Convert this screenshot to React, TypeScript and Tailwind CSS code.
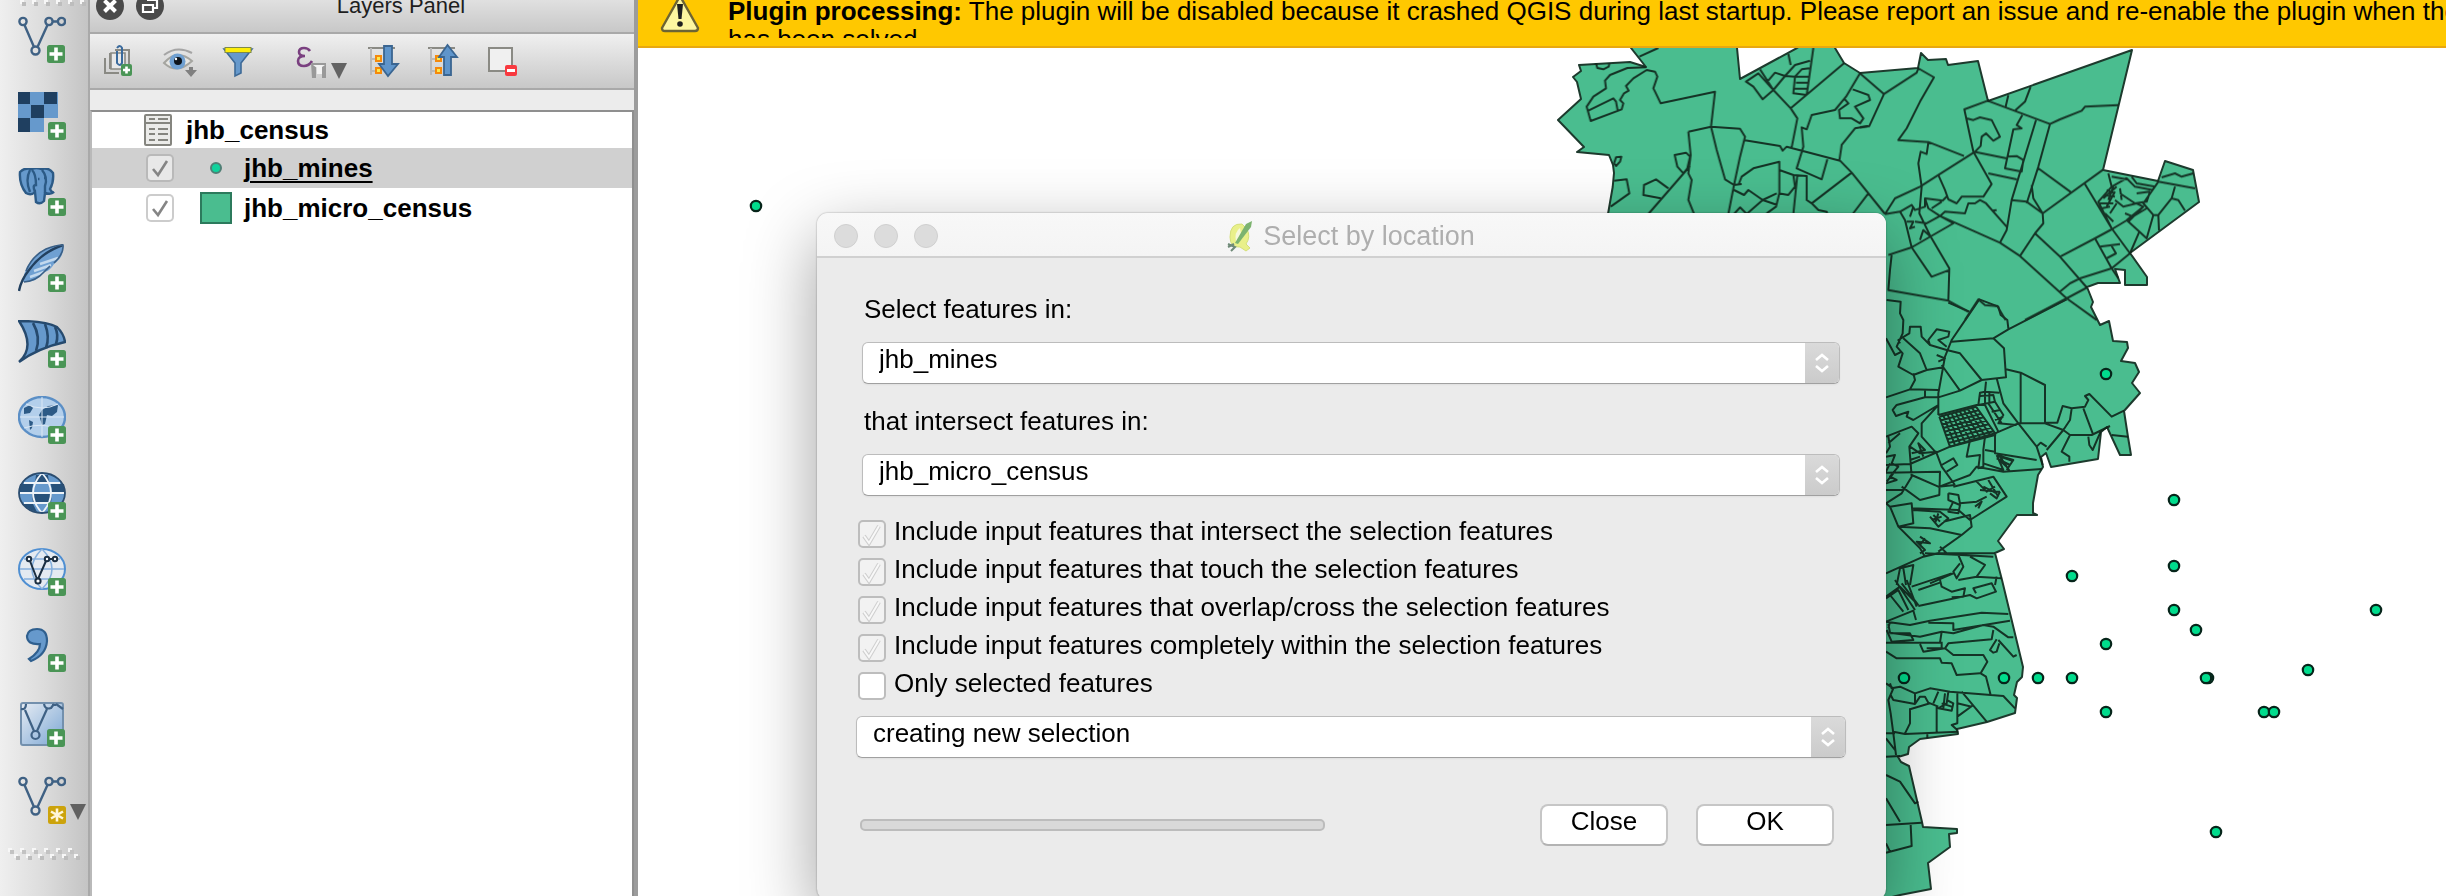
import React from "react";

type IconProps = { children: React.ReactNode; label: string };

function PlusBadge({ x = 30, y = 30 }: { x?: number; y?: number }) {
  return (
    <g transform={`translate(${x} ${y})`}>
      <rect width="18" height="18" rx="2.5" fill="#4a9556" />
      <path d="M9 2.5V15.5M2.5 9H15.5" stroke="#fff" strokeWidth="3.6" />
    </g>
  );
}

function VectorShape() {
  return (
    <g stroke="#3f6184" strokeWidth="2.4" fill="none">
      <path d="M6.5 9 L16 31 M19.5 31 L29.5 9 M35 5.5 H39" />
      <circle cx="5" cy="5.5" r="3.6" />
      <circle cx="31" cy="5.5" r="3.6" />
      <circle cx="43.5" cy="5.5" r="3.6" />
      <circle cx="17.5" cy="34.5" r="4" />
    </g>
  );
}

function ToolButton({ children, label }: IconProps) {
  return (
    <button type="button" aria-label={label} className="block size-12 shrink-0">
      <svg viewBox="0 0 48 48" className="size-12">
        {children}
      </svg>
    </button>
  );
}

function Grip({ className }: { className: string }) {
  return (
    <svg viewBox="0 0 72 12" className={className}>
      {[0, 1, 2, 3, 4, 5].map((i) => (
        <g key={i} transform={`translate(${i * 12} 0)`}>
          <rect x="0" y="0" width="4" height="4" fill="#f7f7f7" />
          <rect x="2" y="2" width="4" height="4" fill="#c2c2c2" />
          <rect x="6" y="6" width="4" height="4" fill="#f7f7f7" />
          <rect x="8" y="8" width="4" height="4" fill="#bdbdbd" />
        </g>
      ))}
    </svg>
  );
}

function SideToolbar() {
  return (
    <nav
      aria-label="Manage layers"
      className="flex w-[90px] shrink-0 flex-col border-r-2 border-[#a9a9a9] bg-linear-to-r from-[#efefef] via-[#dcdcdc] to-[#c4c4c4] pl-[18px]"
    >
      <Grip className="-mt-1.5 mb-2.5 -ml-1 h-3 w-[72px]" />
      <div className="flex flex-col gap-7">
        <ToolButton label="Add vector layer">
          <VectorShape />
          <PlusBadge x={29} y={29} />
        </ToolButton>
        <ToolButton label="Add raster layer">
          <rect width="40" height="40" fill="#6699cc" />
          <path d="M0 0H12V12H0zM26 0H39V12H26zM13 13H26V26H13zM0 26H12V40H0z" fill="#1f3f60" />
          <path d="M26 26H40V40H26z" fill="#d6d6d6" />
          <PlusBadge />
        </ToolButton>
        <ToolButton label="Add PostGIS layers">
          <path
            d="M2 4 Q7 -1 14 1 Q18 -1 23 1 Q31 -1 35 5 Q36 14 32 21 Q34 25 36 24 Q33 27 27 25 L26 33 Q22 37 18 34 L17 24 Q13 28 8 25 Q1 16 2 4Z"
            fill="#6699cc"
            stroke="#2c5a86"
            strokeWidth="2.4"
          />
          <path
            d="M12 2 Q7 12 12 24 M17 24 Q14 17 18 17 Q18 6 14 2 M24 2 Q30 9 27 18 L27 25 M20 11 h1.5 M26 10 h1.5"
            fill="none"
            stroke="#2c5a86"
            strokeWidth="2.4"
          />
          <PlusBadge />
        </ToolButton>
        <ToolButton label="Add SpatiaLite layer">
          <path d="M5 38 Q6 20 22 8 Q32 2 45 1 Q47 12 36 20 Q32 27 26 28 Q20 38 6 38Z" fill="#6fa0d2" />
          <path d="M12 33 L26 28 M16 27 L33 21 M22 20 L40 14" stroke="#c3d9ee" strokeWidth="2.4" />
          <path d="M1 47 Q3 36 11 26 Q24 8 45 1" fill="none" stroke="#22405f" strokeWidth="2.4" />
          <path d="M8 27 Q14 12 28 5 Q38 1 45 1 Q46 10 36 19 M6 38 Q18 37 26 28 L32 22" fill="none" stroke="#3a5f86" strokeWidth="1.6" />
          <PlusBadge />
        </ToolButton>
        <ToolButton label="Add MSSQL layer">
          <path
            d="M1 1 Q28 1 39 7 Q46 14 47 22 Q20 28 1 42 Q18 27 1 1Z"
            fill="#6699cc"
            stroke="#264a6e"
            strokeWidth="2.4"
          />
          <path d="M15 3 Q23 17 18 31 M27 4 Q32 17 28 28 M37 7 Q41 15 38 24" fill="none" stroke="#264a6e" strokeWidth="2.6" />
          <PlusBadge />
        </ToolButton>
        <ToolButton label="Add WMS layer">
          <ellipse cx="24" cy="21" rx="23" ry="20" fill="#b3cfeb" stroke="#5b8fc6" strokeWidth="2.4" />
          <path
            d="M6 12 L12 9 L15 12 L12 17 L6 18Z M24 14 L30 10 L40 9 L39 16 L34 20 L29 19 L27 28 L24 29 L21 19Z M11 24 L15 26 L14 32 L12 34Z M17 8 L21 7 M32 26 L37 25"
            fill="#2c5a86"
          />
          <path d="M2 21H46 M8 8 Q24 16 40 8 M6 32 Q24 26 40 33 M24 1V41" fill="none" stroke="#dbe8f5" strokeWidth="1" />
          <PlusBadge />
        </ToolButton>
        <ToolButton label="Add WCS layer">
          <ellipse cx="24" cy="21" rx="23" ry="20" fill="#6699cc" />
          <path d="M2 12H15L14 21H1Z M33 12H46L47 21H34Z M18 3H30L31 11H17Z M14 21H34L33 31H15Z M5 32H15L19 40Q10 38 5 32Z" fill="#27517a" />
          <path d="M6 11H42 M2 21H46 M6 31H42 M24 1 Q6 21 24 41 M24 1 Q42 21 24 41" fill="none" stroke="#eef3f8" strokeWidth="1.8" />
          <ellipse cx="24" cy="21" rx="23" ry="20" fill="none" stroke="#2b4d70" strokeWidth="1.8" />
          <PlusBadge />
        </ToolButton>
        <ToolButton label="Add WFS layer">
          <ellipse cx="24" cy="21" rx="23" ry="20" fill="#e4eaf1" stroke="#4f8fd2" strokeWidth="2" />
          <path d="M6 11H42 M2 21H46 M6 31H42 M24 1 Q4 21 24 41 M24 1 Q44 21 24 41" fill="none" stroke="#86b0dd" strokeWidth="1.5" />
          <g fill="none" stroke="#1c2f42" strokeWidth="2">
            <path d="M12 13 L19 31 M20 31 L28 13 M30 11H36" />
            <circle cx="11" cy="11" r="2.2" fill="#fff" />
            <circle cx="29" cy="11" r="2.2" fill="#fff" />
            <circle cx="37" cy="11" r="2.2" fill="#fff" />
            <circle cx="20" cy="33" r="2.6" fill="#fff" />
          </g>
          <PlusBadge />
        </ToolButton>
        <ToolButton label="Add delimited text layer">
          <path
            d="M19 5 Q29 5 29 17 Q28 31 13 37 L11 35 Q22 28 22 20 Q9 21 9 12 Q10 5 19 5Z"
            fill="#6699cc"
            stroke="#2f5f8e"
            strokeWidth="2.2"
          />
          <PlusBadge />
        </ToolButton>
        <ToolButton label="Add virtual layer">
          <defs>
            <linearGradient id="virtual" x1="0" y1="0" x2="1" y2="1">
              <stop offset="0" stopColor="#e6ecf3" />
              <stop offset="1" stopColor="#7ba6d4" />
            </linearGradient>
          </defs>
          <rect x="3" y="3" width="42" height="42" rx="2" fill="url(#virtual)" stroke="#7390ad" strokeWidth="2" />
          <g fill="none" stroke="#3f6184" strokeWidth="2.2">
            <path d="M7 10 L16 31 M19 31 L29 9 M34 5 H38" />
            <path d="M3 9 Q8 10 8 4 M26 4 Q27 10 33 8 L36 4 M38 4 L45 9" />
            <circle cx="17.5" cy="35" r="4" />
          </g>
          <PlusBadge x={29} y={29} />
        </ToolButton>
        <div className="flex items-end">
          <ToolButton label="New shapefile layer">
            <VectorShape />
            <rect x="30" y="30" width="18" height="18" rx="2.5" fill="#cca30c" />
            <path d="M39 32.500V45.500M33 35.500L45 42.500M45 35.500L33 42.500" stroke="#fff6d8" strokeWidth="2.6" />
          </ToolButton>
          <svg viewBox="0 0 16 16" className="mb-1 ml-1 size-4">
            <path d="M0 0H16L8 16Z" fill="#616161" />
          </svg>
        </div>
      </div>
      <Grip className="mt-6 -ml-2.5 h-3 w-[72px]" />
    </nav>
  );
}

function PanelButton({ label, children, className }: IconProps & { className: string }) {
  return (
    <button type="button" aria-label={label} className={"block h-9 w-9 shrink-0 " + className}>
      <svg viewBox="0 0 36 36" className="size-9">
        {children}
      </svg>
    </button>
  );
}

function TreeIcon() {
  return (
    <g>
      <path d="M3 5H30" stroke="#8a8a84" strokeWidth="2" />
      <path d="M6 5V32 M6 16H12 M6 28H12" stroke="#b9b9b9" strokeWidth="2" fill="none" />
      <rect x="11" y="13" width="5" height="5" fill="#fce94f" stroke="#f58a0b" strokeWidth="2" />
      <rect x="11" y="25" width="5" height="5" fill="#fce94f" stroke="#f58a0b" strokeWidth="2" />
    </g>
  );
}

function CheckBox({ id, checked, faded }: { id: string; checked: boolean; faded?: boolean }) {
  return (
    <span className="grid size-7 shrink-0">
      <input
        id={id}
        type="checkbox"
        defaultChecked={checked}
        className={
          "col-start-1 row-start-1 size-7 appearance-none rounded-[5px] border-2 " +
          (faded ? "border-[#bdbdbd] bg-[#f2f2f2]" : checked ? "border-black/20 bg-white/50" : "border-[#bdbdbd] bg-white")
        }
      />
      {checked && (
        <svg viewBox="0 0 28 28" className="pointer-events-none col-start-1 row-start-1 size-7">
          {faded ? (
            <g fill="none">
              <path d="M6 16 L11 23 L21 6" stroke="#cfcfcf" strokeWidth="4" />
              <path d="M6 16 L11 23 L21 6" stroke="#f8f8f8" strokeWidth="2" />
            </g>
          ) : (
            <path d="M7 15 L12 21 L21 7" fill="none" stroke="#858585" strokeWidth="2.6" />
          )}
        </svg>
      )}
    </span>
  );
}

function LayersPanel() {
  return (
    <aside className="flex w-[548px] shrink-0 flex-col border-r-4 border-[#9c9c9c] bg-[#ececec]">
      <header className="h-[34px] overflow-hidden border-b-2 border-[#a9a9a9] bg-linear-to-b from-[#e0e0e0] to-[#c8c8c8]">
        <div className="-mt-2.5 flex h-8 items-center gap-3 pl-1.5">
          <button type="button" aria-label="Close panel" className="size-7">
            <svg viewBox="0 0 28 28">
              <circle cx="14" cy="14" r="14" fill="#4a4a4a" />
              <path d="M8.500 8.500L19.500 19.500M19.500 8.500L8.500 19.500" stroke="#fff" strokeWidth="4" />
            </svg>
          </button>
          <button type="button" aria-label="Float panel" className="size-7">
            <svg viewBox="0 0 28 28">
              <circle cx="14" cy="14" r="14" fill="#4a4a4a" />
              <path d="M11 8H21V16H18 M7 13H17V20H7Z" fill="none" stroke="#fff" strokeWidth="2.2" />
            </svg>
          </button>
          <h2 className="flex-1 pr-2 text-center text-[22px] leading-6 text-[#1e1e1e]">Layers Panel</h2>
        </div>
      </header>

      <div className="flex h-14 items-center border-b-2 border-[#a9a9a9] bg-linear-to-b from-[#f0f0f0] to-[#c8c8c8] pl-2.5">
        <PanelButton label="Add group" className="">
          <path d="M5 15V30H19 M10 10V25H25 M15 7H29V22" fill="none" stroke="#8a8a84" strokeWidth="2" />
          <path d="M11 10H25V26H11Z" fill="#e9e9e9" stroke="#8a8a84" strokeWidth="1.6" />
          <path d="M17 8V20Q20 24 22 20V5Q20 1 17 5" fill="none" stroke="#3a6a9c" strokeWidth="2" />
          <rect x="21" y="21" width="11" height="12" rx="2" fill="#4a9556" />
          <path d="M26.500 23.500V30.500M23 27H30" stroke="#fff" strokeWidth="2.6" />
        </PanelButton>
        <PanelButton label="Manage layer visibility" className="ml-[26px]">
          <path d="M2 12 Q15 2 30 10" fill="none" stroke="#a5a5a5" strokeWidth="2" />
          <path d="M2 20 Q15 5 30 18 Q15 32 2 20Z" fill="#e6e6e3" stroke="#a5a5a0" strokeWidth="2" />
          <circle cx="15.500" cy="18.500" r="8" fill="#6fa0d2" />
          <circle cx="16" cy="18" r="4" fill="#0d141c" />
          <circle cx="14" cy="16" r="1.200" fill="#fff" />
          <path d="M23 27H35L29 34Z M27 24H31V28H27Z" fill="#808080" />
        </PanelButton>
        <PanelButton label="Filter legend" className="ml-[22px]">
          <path d="M4 6H32L21 20V30L15 33V20Z" fill="#6699cc" stroke="#3e6a97" strokeWidth="1.600" />
          <rect x="5" y="4.500" width="26" height="5" fill="#fdee0a" stroke="#7f8a4a" strokeWidth="1" />
        </PanelButton>
        <button type="button" aria-label="Filter legend by expression" className="ml-10 block h-9 w-[52px]">
          <svg viewBox="0 0 52 36" className="h-9 w-[52px]">
            <path d="M14 8 Q12 5 8 5 Q3 5 3 9 Q3 13 9 13 Q2 13 2 18 Q2 23 8 23 Q13 23 16 18" fill="none" stroke="#7a4080" strokeWidth="2.600" />
            <path d="M15 20H30V35H26V25L23 22L20 25V35H16Z" fill="#999" />
            <path d="M17 22H29L26 24V31H21V25Z" fill="#f3f3f3" />
            <path d="M35 20H51L43 36Z" fill="#636363" />
          </svg>
        </button>
        <PanelButton label="Expand all" className="ml-[17px]">
          <TreeIcon />
          <path d="M19 3H27V21H33L23 33L14 21H19Z" fill="#5f95cb" stroke="#3a6591" strokeWidth="1.800" />
        </PanelButton>
        <PanelButton label="Collapse all" className="ml-6">
          <TreeIcon />
          <path d="M19 32H26V14H32L22.500 2L14 14H19Z" fill="#5f95cb" stroke="#3a6591" strokeWidth="1.800" />
        </PanelButton>
        <PanelButton label="Remove layer" className="ml-6">
          <rect x="4" y="5" width="23" height="23" fill="#f0f0f0" stroke="#8a8a84" strokeWidth="2" />
          <rect x="20" y="22" width="12" height="11" rx="2" fill="#f8393f" />
          <path d="M22 27.500H30" stroke="#fff" strokeWidth="3" />
        </PanelButton>
      </div>

      <ul className="mt-5 flex-1 border-t-2 border-r-2 border-l-2 border-[#8f8f8f] border-l-[#b9b9b9] bg-white text-[26px] leading-7 font-bold text-black">
        <li className="flex h-9 items-center pl-[52px]">
          <svg viewBox="0 0 28 32" className="h-8 w-7">
            <rect x="1" y="1" width="26" height="30" rx="1" fill="#ebebe9" stroke="#85857f" strokeWidth="2" />
            <path d="M2 9H26" stroke="#85857f" strokeWidth="2" />
            <path d="M5 5H11M14 5H24M5 15H11M14 15H24M5 20H11M14 20H24M5 26H11M14 26H24" stroke="#85857f" strokeWidth="2" />
          </svg>
          <span className="ml-3.5">jhb_census</span>
        </li>
        <li className="flex h-10 items-center bg-[#d0d0d0] pl-[54px]">
          <CheckBox id="layer-mines" checked />
          <svg viewBox="0 0 32 32" className="ml-[26px] size-8">
            <circle cx="16" cy="16" r="5" fill="#10d29c" stroke="#4f7f75" strokeWidth="2" />
          </svg>
          <label htmlFor="layer-mines" className="ml-3 underline decoration-2 underline-offset-4">
            jhb_mines
          </label>
        </li>
        <li className="flex h-10 items-center pl-[54px]">
          <CheckBox id="layer-micro" checked />
          <span className="ml-[26px] size-8 border-2 border-[#2c7a5c] bg-[#4abd8f]" />
          <label htmlFor="layer-micro" className="ml-3">
            jhb_micro_census
          </label>
        </li>
      </ul>
    </aside>
  );
}

const OUTLINE =
  "M1608 214 L1612.700 187 L1614 173 L1613 165 L1609 155 L1577 152 L1584 147 L1558 120 L1581 99 L1577 82 L1573 77 L1581 71 L1579 65 L1630 62 L1646 67 L1631 48 L1629 40 H1736 L1737 48 L1740 79 L1797 48 L1810 40 H1832 L1835 48 L1844 63 L1860 73 L1918 68 L1921 53 L1928 60 L1946 59 L1948 65 L1978 61 L1988 101 L2132 50 L2103 170 L2158 181 L2165 161 L2193 170 L2199 202 L2130 253 L2147 277 L2147 285 L2125 285 L2125 270 L2115 269 L2120 283 L2098 283 L2087 287 L2093 302 L2091 307 L2100 325 L2109 321 L2113 341 L2127 342 L2128 348 L2121 361 L2135 363 L2139 372 L2132 383 L2140 393 L2124 411 L2128 437 L2131 455 L2120 455 L2107 427 L2101 432 L2098 459 L2051 467 L2046 453 L2041 457 L2043 467 L2038 475 L2033 503 L2033 513 L2037 515 L2017 515 L1998 541 L2004 549 L1995 553 L2002 580 L2023 667 L2022 677 L2017 682 L2014 695 L2017 698 L2015 713 L1987 722 L1957 729 L1958 734 L1920 739 L1909 747 L1908 754 L1898 757 L1901 762 L1909 766 L1922 822 L1923 827 L1957 829 L1957 833 L1949 834 L1950 847 L1928 863 L1931 889 L1900 895 L1880 900 H1700 Z";

const NORTH_WEST =
  "M298 50L355 24 M168 70L172 84L190 88L206 80L208 70 M318 82L262 84L210 105L195 122L198 145L160 170L140 200L152 243L245 208L250 190L240 180L252 160L266 152L258 138L280 115L320 90L345 95L352 110L340 145L345 155L362 190L525 155L513 260 M145 212L220 175L228 185L233 212 M445 275L513 260L600 266L615 290L600 350L582 435L565 522 M445 275L452 345L445 400L455 420L445 480L462 522 M513 260L530 330L555 418L582 435L605 432 M404 345L438 338L450 350L442 385L430 400L412 380Z M450 378L325 522 M385 445L348 418L312 435L310 465L362 475 M222 370L228 352L244 350L240 365L228 378Z M222 422L260 418L268 460L212 500 M610 300L720 318L728 332L740 320L900 362L935 398L1035 522 M595 435L605 410L640 385L718 365L718 460L708 500L680 520 M582 450L612 465L625 450L668 480L710 460 M668 480L712 495 M668 480L620 522 M582 522L600 502L620 522 M718 390L760 405L765 440L745 465L715 460 M760 405L800 408L800 480L815 490L935 398 M772 405L760 522 M815 490L835 510L860 515L862 522 M985 460L938 522 M752 205L772 235L755 322 M752 205L700 150L660 88 M912 70L752 205 M618 125L655 100L682 130L700 150L668 178L640 140Z M682 125L705 98L735 108L765 75L810 62 M745 42L752 75 M820 24L800 165 M735 108L765 110H805 M765 110L760 160L800 165 M768 128H803 M764 146H802 M765 110L785 88L808 85 M735 108L700 150 M960 100L918 170L885 210L815 225L800 268L785 262L790 320L770 385L845 418L862 358 M938 148L985 165L990 180L945 200L970 235L960 250L935 235L900 235L897 210L925 190L912 175 M985 258L945 265L905 315L898 362";

const NORTH_EAST =
  "M0 100L72 162L28 258L0 262 M72 162L170 98L175 85L222 112L180 185L140 265L115 300L205 306L312 348 M205 308L200 342L182 335L175 370L185 440L178 520L212 590L268 685L265 782 M75 522L105 475L180 440L235 405L345 335L362 318L365 290L378 280L400 302L420 290L395 240L360 232L340 240L320 235 M383 182L313 208L340 335L395 432L370 470L305 470L290 490L265 478L255 450L235 405 M383 182L570 252L600 238L665 212L675 200L775 195 M437 200L445 165 M465 212L495 185L512 140 M487 225L470 255L485 265L460 268L435 385L485 395L490 360L470 348L440 350 M340 335L440 355 M528 240L455 480L440 570L420 608 M570 252L535 380L500 490 M455 480L500 485L548 520L550 550L525 580L480 648 M535 385L635 458 M515 435L520 475L548 520L728 390 M385 400L470 418 M75 522L120 515L135 540L155 622 M120 515L155 495L165 510L195 500L195 475L248 482L260 470 M195 475L205 505L240 528L420 608L480 648L620 775L710 840 M215 505L245 485 M240 528L255 515L315 520L325 490L345 490L360 480L378 490L440 560 M85 645L155 622L280 550L240 528 M155 622L215 710L268 690 M140 545L160 545L150 565L165 560 M165 545L200 550L240 528 M180 600L190 570L212 590 M150 530L160 500 M95 645L90 690L85 750L265 782L325 815 M395 512L410 510 M315 840L355 778L375 795L412 798L437 840 M495 840L620 775L682 742 M525 580L600 650L680 742 M600 650L705 595L755 568L860 505 M600 755L630 730L660 715L755 685L810 640 M675 432L755 565L810 640 M705 595L755 685L775 715 M720 620L780 612 M755 618L768 640L740 655 M810 640L838 575L800 540 M838 575L860 595L880 525L895 525L897 572 M880 525L850 490L895 425L1005 445 M905 412L945 400L965 410L1000 400 M945 440L935 475L895 525 M935 475L955 480L975 512 M745 400L755 440L715 485L755 565 M755 440L800 415L825 440L880 450 M780 460L825 490L860 485L870 455 M830 460L870 455 M765 480L790 500L830 490L850 500L800 540 M755 410L800 418 M815 410L830 430L885 440 M735 465L765 470 M720 490H760 M725 505L750 500 M740 450L765 460 M730 475L770 440 M740 500L765 455 M750 520L770 490 M795 520L820 530 M805 545L850 500 M735 520L760 545 M760 440L745 480 M780 445L785 480";

const CENTRE =
  "M50 30L92 35L90 70L100 90L98 130L80 170L98 190L85 230L130 255L170 240L220 232 M235 38L298 65 M415 115L412 90L392 75L385 50L328 28L245 150L225 200L205 310L205 375 M590 28L415 118L370 145L245 155 M370 145L402 175L408 262L335 270L270 190L230 180 M335 270L270 302L205 322 M270 302L215 225 M408 238L452 248L525 285L525 400L445 400L400 340L380 265 M452 248V400 M525 400L580 420L530 480 M525 398L562 398L578 348L605 355L600 390L580 420L600 435L665 435L720 408 M605 355L645 350L655 330L645 318L658 312L725 380L762 362 M640 355L668 430 M600 435L575 485L598 500V515 M692 425L668 480L658 465L655 440 M725 435L774 440 M445 400L500 470L518 525 M500 470L512 458L530 470 M445 400L375 430L375 490L500 510 M205 375L320 345L345 345L385 425 M325 345L330 308L345 305L348 275 M345 305L388 308 M330 318L370 315L375 335L325 345 M355 340L395 400 M375 335L400 375L385 400L440 405 M365 365L390 360 M345 308V340 M358 308V340 M375 390L400 380 M205 300L120 298L48 322 M130 250L135 270L120 298 M165 302V320 M205 322L165 322L80 345L68 360L78 378L115 365L110 380L130 390L205 345L155 400L155 440L200 490 M48 440L125 410L145 430L118 470L125 560L95 610L48 640 M48 525L120 522L240 470L375 430 M200 490L215 530L255 585 M48 548L210 545L208 615L150 630L95 590 M48 145L75 195L95 185 M90 160L85 150L118 130L120 110H152L155 140L180 165L230 180 M180 165L175 150L200 118L238 125L235 140L205 150L230 170 M100 145L150 190L170 240 M200 195L225 205L205 215 M208 590L300 555L320 530L400 545L515 537 M125 555L205 590L255 585 M250 590L370 560L410 620L300 690 M290 500L330 495L325 535L340 530V480L345 440L300 450Z M345 480L375 485 M340 520L400 540L380 495 M380 495L430 510L410 540 M380 505L420 525 M390 500L420 545 M385 498L425 512 M388 510L415 535 M215 525L250 505L262 525L230 545 M235 610L265 615L270 640L320 635L350 620 M235 610L235 630L270 645L265 670L235 665L250 635 M320 575L350 605L375 590 M330 600L390 605 M355 570L385 620 M340 590L380 610 M360 610L380 625L390 605 M315 650L335 635L325 655 M60 650L48 640 M60 650L125 640L130 700L85 710Z M85 710L150 775L165 800 M85 710L180 715L275 735L205 785 M130 660L210 665L235 685L205 710L180 680 M125 655L265 660L300 690 M190 675L210 695 M205 670L195 700 M185 690L215 680 M220 695L300 675L305 710L275 735 M150 740L180 760L140 755L165 780L150 790 M165 745L150 765 M210 770L230 790 M48 850L160 800L205 790L270 790L374 790 M165 790L275 795L370 800 M80 885L90 835L130 825L120 885 M100 835L108 885 M265 795L280 830L260 865L250 845L270 820 M300 800L345 825L320 860L265 870 M250 850L180 880 M320 860L395 865 M125 890L245 850 M380 860L375 885 M55 440L60 470L48 490 M48 500L75 495L65 520L85 530L60 560L80 570L48 580 M55 460L90 430 M48 600H100 M60 520L48 545 M70 550L50 575 M120 470L150 490L200 485 M125 490L165 480L145 460L160 500 M120 510L150 500";

const SOUTH =
  "M48 50L90 20L130 60L145 75 M48 125L130 92L138 120 M145 78L300 45L320 55L378 35L365 10L310 25L318 40 M48 55L85 30L115 90 M60 45L100 95 M95 10L145 75 M75 0L135 90 M110 0L140 80 M210 0L215 20L245 35L285 25L280 50L245 52 M145 30L210 8 M48 125L120 135L180 122L335 98L415 102 M55 145L60 125 M175 128L250 130L250 150L420 122 M55 132L60 158L150 170L215 155L250 160L340 135L370 140L415 172H430 M60 160H120L130 180L65 185L50 150 M48 188H210L215 155 M150 192L160 215L225 205L235 190L365 178L370 150 M215 185V205 M170 205H215 M385 180L430 230L440 225 M380 178L360 210L370 218L380 215L388 190 M225 205L250 225H340L352 245L332 280L348 290L362 345 M48 215L80 235H210L215 248L245 250L260 285L330 280 M60 310L65 325L90 320L135 340L180 325L240 335L400 348L435 385 M48 310L70 325L55 360L62 400L70 460L78 525 M62 345L70 360L135 372L150 350L165 350L175 368L205 380 M135 340V372 M120 385L120 430L105 460 M120 388L180 370 M200 380V455 M205 335L190 370 M235 335L230 370L205 385L245 392L250 370L230 360 M215 370L245 380 M225 340L220 385 M262 335V430L245 435L262 450 M275 335L350 425 M310 375L262 410 M262 370L305 380 M70 455L105 462L265 455 M172 460V475 M48 530L90 528 M48 585L90 605L135 670L145 665 M48 655L90 725 M48 735L155 728 M122 735L125 798L48 818 M48 790L60 815 M48 460H75 M48 475L75 510";

const MINES: [number, number][] = [
  [756, 206],
  [2106, 374],
  [2174, 500],
  [2174, 566],
  [2072, 576],
  [2174, 610],
  [2196, 630],
  [2106, 644],
  [1904, 678],
  [2004, 678],
  [2038, 678],
  [2072, 678],
  [2106, 712],
  [2376, 610],
  [2308, 670],
  [2208, 678],
  [2206, 678],
  [2264, 712],
  [2274, 712],
  [2216, 832],
];

function lerp(a: number[], b: number[], t: number) {
  return `${a[0] + (b[0] - a[0]) * t} ${a[1] + (b[1] - a[1]) * t}`;
}

function cityBlocks() {
  const nw = [208, 380];
  const ne = [318, 350];
  const se = [378, 434];
  const sw = [240, 470];
  const lines: string[] = [];
  for (let i = 0; i <= 8; i++) lines.push(`M${lerp(nw, sw, i / 8)}L${lerp(ne, se, i / 8)}`);
  for (let i = 0; i <= 9; i++) lines.push(`M${lerp(nw, ne, i / 9)}L${lerp(sw, se, i / 9)}`);
  return lines.join("");
}

function MapCanvas() {
  return (
    <svg viewBox="638 48 1808 848" className="block h-[848px] w-[1808px]" role="img" aria-label="Map canvas">
      <path d={OUTLINE} fill="#4abd8f" stroke="#1d3a2d" strokeWidth="2" strokeLinejoin="round" />
      <g fill="none" stroke="#10241a" strokeWidth="6" strokeLinejoin="round" opacity="0.900">
        <path d={NORTH_WEST} transform="translate(1540 40) scale(0.33333)" />
        <path d={NORTH_EAST} transform="translate(1860 40) scale(0.33333)" />
        <path d={CENTRE} transform="translate(1870 290) scale(0.33333)" />
        <path d={cityBlocks()} transform="translate(1870 290) scale(0.33333)" />
        <path d={SOUTH} transform="translate(1870 580) scale(0.33333)" />
      </g>
      {MINES.map(([x, y], i) => (
        <circle key={i} cx={x} cy={y} r="5.200" fill="#00dc8c" stroke="#06251a" strokeWidth="2.200" />
      ))}
    </svg>
  );
}

function Banner() {
  return (
    <div role="alert" className="flex h-12 items-start border-b-2 border-[#e8a810] bg-[#ffc800] pl-[22px]">
      <svg viewBox="0 0 40 40" className="-mt-1.5 size-10 shrink-0">
        <path d="M20 2 L38 34 Q38 37 35 37 H5 Q2 37 2 34Z" fill="#fdf6a0" stroke="#6d6434" strokeWidth="2.400" strokeLinejoin="round" />
        <path d="M17 10H23L21.500 25H18.500Z" fill="#1f1f1f" />
        <circle cx="20" cy="30" r="2.800" fill="#1f1f1f" />
      </svg>
      <div className="ml-7 h-[38px] flex-1 overflow-hidden">
        <p className="-mt-[3px] text-[26px] leading-7 whitespace-nowrap text-black">
          <b>Plugin processing:</b> The plugin will be disabled because it crashed QGIS during last startup. Please report
          an issue and re-enable the plugin when the
          <br />
          has been solved
        </p>
      </div>
    </div>
  );
}

function Combo({ id, value }: { id: string; value: string }) {
  return (
    <div className="grid h-[42px] overflow-hidden rounded-[6px] border border-[#bcbcbc] border-b-[#a0a0a0] bg-white shadow-xs">
      <select
        id={id}
        aria-label={value}
        defaultValue={value}
        className="col-start-1 row-start-1 w-full appearance-none bg-transparent pb-2 pl-4 text-[26px] leading-8 text-black"
      >
        <option>{value}</option>
      </select>
      <span className="pointer-events-none col-start-1 row-start-1 flex w-[34px] items-center justify-center justify-self-end bg-linear-to-b from-[#dadada] to-[#cbcbcb]">
        <svg viewBox="0 0 16 24" className="h-6 w-4">
          <path d="M2 9L8 4L14 9 M2 15L8 20L14 15" fill="none" stroke="#fff" strokeWidth="2.600" />
        </svg>
      </span>
    </div>
  );
}

const OPTIONS = [
  "Include input features that intersect the selection features",
  "Include input features that touch the selection features",
  "Include input features that overlap/cross the selection features",
  "Include input features completely within the selection features",
];

function Dialog() {
  return (
    <section
      role="dialog"
      aria-label="Select by location"
      className="absolute top-[213px] left-[179px] w-[1069px] overflow-hidden rounded-[11px] bg-[#ebebeb] shadow-[0_24px_70px_rgba(0,0,0,0.38),0_0_2px_rgba(0,0,0,0.4)]"
    >
      <header className="flex h-[45px] items-center border-b-2 border-[#d0d0d0] bg-linear-to-b from-[#f8f8f8] to-[#f4f4f4] pt-0.5 pl-[17px]">
        <div className="flex gap-4">
          <span className="size-6 rounded-full border border-[#cfcfcf] bg-[#dcdcdc]" />
          <span className="size-6 rounded-full border border-[#cfcfcf] bg-[#dcdcdc]" />
          <span className="size-6 rounded-full border border-[#cfcfcf] bg-[#dcdcdc]" />
        </div>
        <div className="mr-[124px] flex flex-1 items-center justify-center gap-2.5">
          <svg viewBox="0 0 28 32" className="h-8 w-7">
            <path d="M17 4 Q5 3 5 17 Q5 28 15 27 L21 31 L25 28 L21 24 Q26 17 22 9 Z" fill="#e9f08a" stroke="#d4df7a" strokeWidth="1" />
            <path d="M15 8 Q9 12 11 22 L16 14Z" fill="#f6f8dc" />
            <path d="M10 23 L21 4 L27 1 L26 7 L13 24 Z" fill="#7cb36f" />
            <path d="M3 24 L10 27 L6 31 M3 27 L9 24" fill="none" stroke="#6f8a78" strokeWidth="2" />
          </svg>
          <h1 className="text-[27px] leading-8 text-[#aeaeae]">Select by location</h1>
        </div>
      </header>

      <form className="flex flex-col pt-[37px] pr-10 pb-[54px] pl-[41px] text-[26px] leading-7 text-black">
        <div className="mr-1.5 ml-1 flex flex-col">
          <label htmlFor="source" className="pl-0.5">
            Select features in:
          </label>
          <div className="mt-[19px]">
            <Combo id="source" value="jhb_mines" />
          </div>
          <label htmlFor="target" className="mt-[23px] pl-0.5">
            that intersect features in:
          </label>
          <div className="mt-[19px]">
            <Combo id="target" value="jhb_micro_census" />
          </div>
        </div>

        <div className="mt-[21px] flex flex-col">
          {OPTIONS.map((text, i) => (
            <div key={text} className="flex h-[38px] items-start gap-2">
              <span className="mt-[3px]">
                <CheckBox id={`option-${i}`} checked faded />
              </span>
              <label htmlFor={`option-${i}`}>{text}</label>
            </div>
          ))}
          <div className="flex h-[38px] items-start gap-2">
            <span className="mt-[3px]">
              <CheckBox id="only-selected" checked={false} />
            </span>
            <label htmlFor="only-selected">Only selected features</label>
          </div>
        </div>

        <div className="mt-[9px] -ml-0.5">
          <Combo id="mode" value="creating new selection" />
        </div>

        <div className="mt-[46px] flex items-center pr-3 pl-0.5">
          <div
            role="progressbar"
            aria-label="Progress"
            className="h-3 w-[465px] rounded-[5px] border-2 border-[#bcbcbc] bg-[#d9d9d9]"
          />
          <div className="ml-auto flex gap-7">
            <button type="button" className="h-[42px] w-32 rounded-[8px] border-2 border-[#c6c6c6] border-b-[#b3b3b3] bg-white pb-2">
              Close
            </button>
            <button type="button" className="h-[42px] w-[138px] rounded-[8px] border-2 border-[#c6c6c6] border-b-[#b3b3b3] bg-white pb-2">
              OK
            </button>
          </div>
        </div>
      </form>
    </section>
  );
}

export default function App() {
  return (
    <div className="flex h-screen overflow-hidden bg-white font-['Liberation_Sans',Arial,sans-serif]">
      <SideToolbar />
      <LayersPanel />
      <main className="relative min-w-0 flex-1 overflow-hidden">
        <Banner />
        <MapCanvas />
        <Dialog />
      </main>
    </div>
  );
}
